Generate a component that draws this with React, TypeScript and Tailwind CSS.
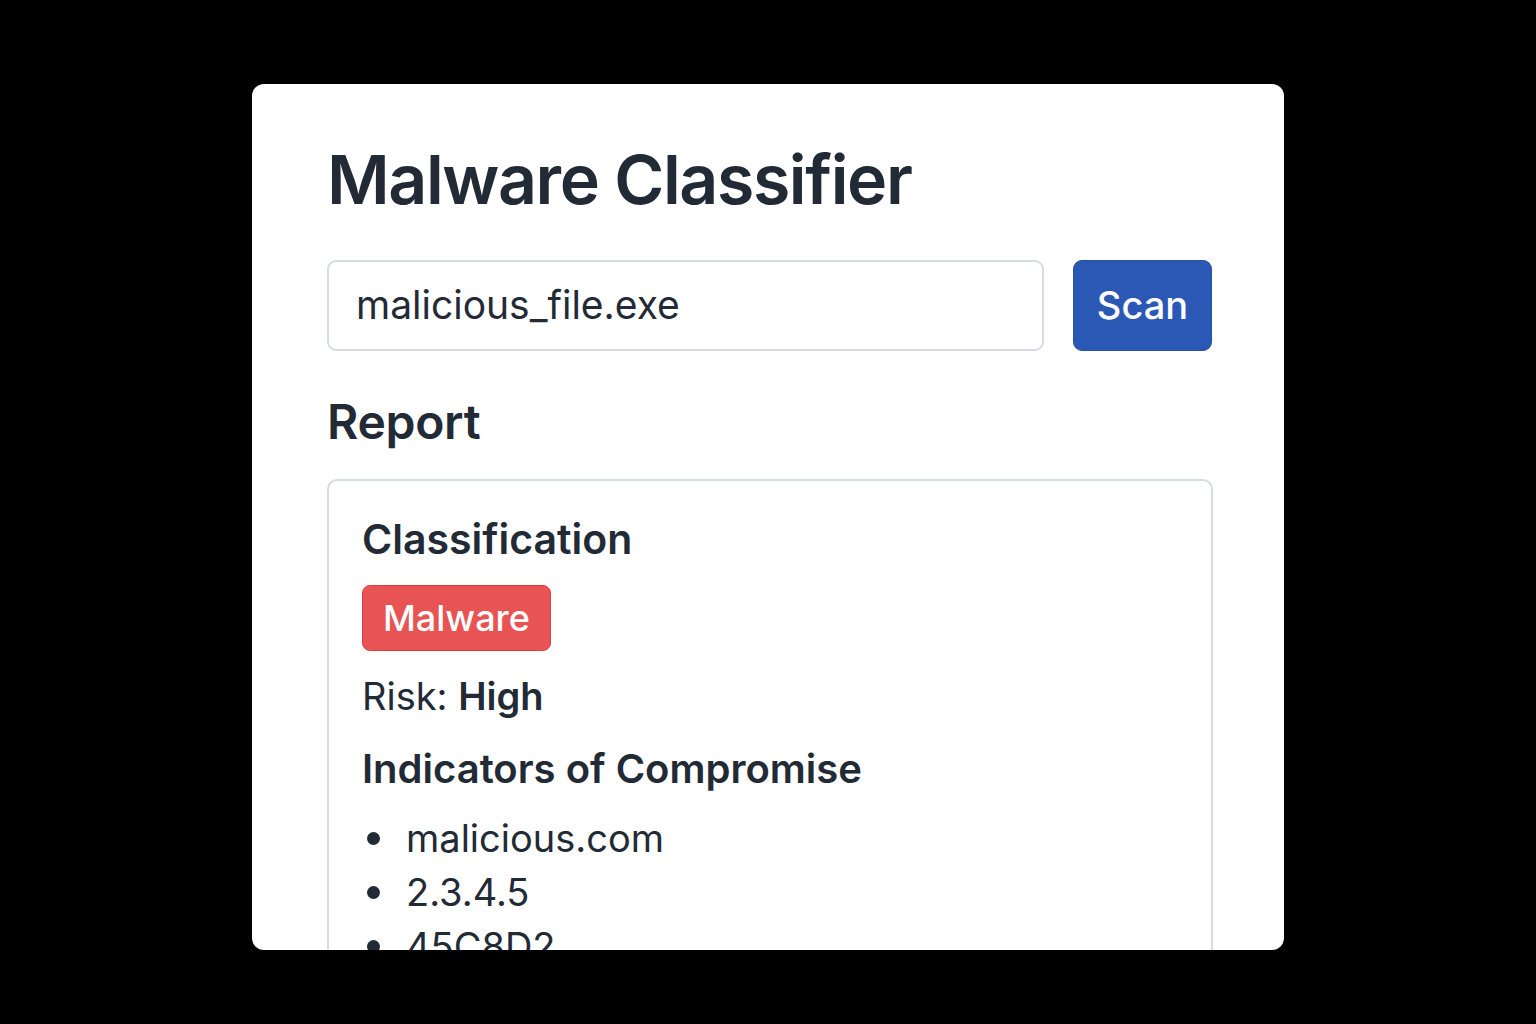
import React from "react";

export default function App() {
  return (
    <div className="w-[1536px] h-[1024px] bg-black flex justify-center pt-[84px]" style={{ fontFamily: "Inter, 'Noto Sans', sans-serif" }}>
      <div className="w-[1032px] h-[866px] bg-white rounded-[12px] overflow-hidden pl-[75px] pr-[72px] pt-[47px] text-[#222a36]">
        <h1 className="text-[68px] leading-[96px] font-semibold tracking-[-1.4px]">Malware Classifier</h1>
        <div className="flex gap-[29px] mt-[33px]">
          <div className="w-[717px] shrink-0 h-[91px] border-2 border-[#d7dbe3] rounded-[9px] flex items-center pl-[27px] text-[39px]">
            malicious_file.exe
          </div>
          <button className="w-[139px] shrink-0 h-[91px] bg-[#2c58b5] border border-[#2a4fa8] rounded-[9px] text-white text-[38px] font-medium flex items-center justify-center">
            Scan
          </button>
        </div>
        <h2 className="text-[48px] font-semibold leading-[60px] mt-[41px] tracking-[-0.3px]">Report</h2>
        <div className="mt-[27px] w-[886px] h-[600px] border-2 border-[#d7dbe3] rounded-[10px] px-[33px] pt-[30px]">
          <h3 className="text-[41px] font-semibold leading-[56px]">Classification</h3>
          <span className="inline-block mt-[18px] bg-[#e85353] border border-[#e03e3e] rounded-[8px] px-[20px] h-[66px] leading-[64px] text-white text-[36px] font-medium">
            Malware
          </span>
          <p className="text-[38px] leading-[50px] mt-[20px]">
            Risk: <span className="font-semibold">High</span>
          </p>
          <h3 className="text-[40px] font-semibold leading-[52px] mt-[22px]">Indicators of Compromise</h3>
          <ul className="mt-[16px] text-[38px] leading-[54px]">
            {["malicious.com", "2.3.4.5", "45C8D2"].map((t) => (
              <li key={t} className="flex items-center">
                <span className="w-[13px] h-[13px] rounded-full bg-[#222a36] ml-[5px] mr-[26px]" />
                {t}
              </li>
            ))}
          </ul>
        </div>
      </div>
    </div>
  );
}
